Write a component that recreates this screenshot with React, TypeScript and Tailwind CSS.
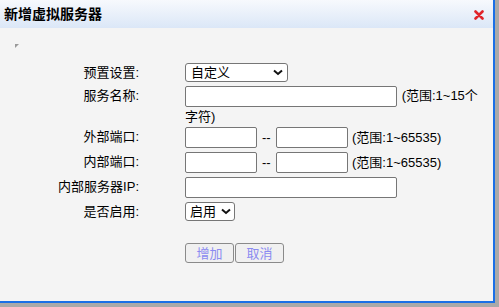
import React from "react";

const font = "font-['Liberation_Sans','Noto_Sans_CJK_SC',sans-serif]";

const Row = ({ label, children, h = "h-[25px]" }: { label: string; children: React.ReactNode; h?: string }) => (
  <div className={`flex ${h}`}>
    <div className="w-[140px] pr-[1px] text-right leading-[20px] pt-[0px]">{label}</div>
    <div className="ml-[45px] w-[300px]">{children}</div>
  </div>
);

const Input = ({ w }: { w: string }) => (
  <input className={`${w} h-[21px] bg-white border border-[#767676] rounded-[2px] align-top`} />
);

const Chevron = () => (
  <svg width="10" height="7" viewBox="0 0 10 7" className="inline-block">
    <path d="M1 1.5 L5 5 L9 1.5" stroke="#111" strokeWidth="2" fill="none" />
  </svg>
);

export default function App() {
  return (
    <div className={`w-[499px] h-[307px] bg-[#a9a9a9] text-[13px] text-black ${font}`}>
      <div className="w-[495px] h-[303px] bg-[#f4f4f4] border-r-2 border-b-2 border-[#1a6fe6] flex flex-col">
        {/* title bar */}
        <div className="h-[28px] bg-gradient-to-b from-[#f7f9fd] to-[#dbe7f7] flex items-center justify-between pl-[4px] pr-[9px]">
          <span className="font-bold text-[14px]">新增虚拟服务器</span>
          <svg width="10" height="10" viewBox="0 0 10 10" className="mt-[2px]">
            <path d="M1.5 1.5 L8.5 8.5 M8.5 1.5 L1.5 8.5" stroke="#e0242b" strokeWidth="2.6" strokeLinecap="round" />
          </svg>
        </div>

        <div className="relative flex-1">
          <div className="absolute left-[15px] top-[16px] w-[4px] h-[4px] bg-[#9a9a9a] [clip-path:polygon(0_0,100%_0,0_100%)]" />

          <div className="pt-[35px] flex flex-col">
            <Row label="预置设置:" h="h-[23px]">
              <div className="w-[103px] h-[19px] bg-white border border-[#767676] rounded-[3px] flex items-center justify-between pl-[5px] pr-[4px] leading-none">
                <span>自定义</span>
                <Chevron />
              </div>
            </Row>
            <Row label="服务名称:" h="h-[41px]">
              <div className="leading-[20px]">
                <Input w="w-[212px]" /> <span className="ml-[1px]">(范围:1~15个字符)</span>
              </div>
            </Row>
            <Row label="外部端口:">
              <div className="flex items-center">
                <Input w="w-[72px]" />
                <span className="mx-[5px] w-[9px]">--</span>
                <Input w="w-[72px]" />
                <span className="ml-[4px]">(范围:1~65535)</span>
              </div>
            </Row>
            <Row label="内部端口:">
              <div className="flex items-center">
                <Input w="w-[72px]" />
                <span className="mx-[5px] w-[9px]">--</span>
                <Input w="w-[72px]" />
                <span className="ml-[4px]">(范围:1~65535)</span>
              </div>
            </Row>
            <Row label="内部服务器IP:">
              <Input w="w-[212px]" />
            </Row>
            <Row label="是否启用:">
              <div className="w-[50px] h-[19px] bg-white border border-[#767676] rounded-[3px] flex items-center justify-between pl-[4px] pr-[3px] leading-none">
                <span>启用</span>
                <Chevron />
              </div>
            </Row>
            <div className="flex mt-[16px] ml-[185px]">
              <button className="w-[49px] h-[20px] bg-[#f0f0f0] border border-[#8a8a8a] rounded-[3px] text-[#8b8bf0] leading-none">增加</button>
              <button className="w-[49px] h-[20px] ml-[1px] bg-[#f0f0f0] border border-[#8a8a8a] rounded-[3px] text-[#8b8bf0] leading-none">取消</button>
            </div>
          </div>
        </div>
      </div>
    </div>
  );
}
